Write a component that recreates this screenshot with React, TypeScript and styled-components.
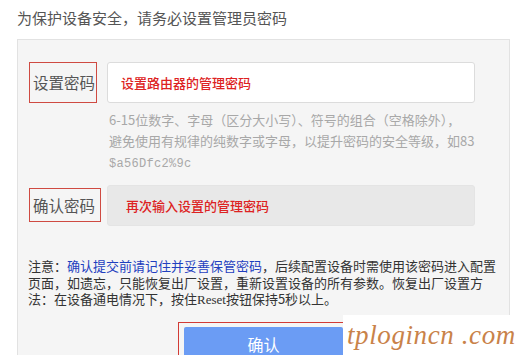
import styled, { createGlobalStyle } from "styled-components";

const GlobalStyle = createGlobalStyle`
    html, body {
        margin: 0;
        padding: 0;
        background: #ffffff;
        overflow: hidden;
    }
    body {
        font-family: "Noto Sans CJK SC", "Noto Sans", sans-serif;
    }
`;

const Page = styled.div`
    position: relative;
    width: 519px;
    height: 355px;
    overflow: hidden;
    background: #fff;
`;

const Title = styled.div`
    padding: 8px 0 0 17px;
    font-size: 15px;
    line-height: 20px;
    color: #555;
`;

const Panel = styled.div`
    margin: 11px 0 0 17px;
    width: 493px;
    height: 340px;
    box-sizing: border-box;
    border: 1px solid #e2e2e2;
    background: #f5f5f5;
    padding: 21px 12px 0 11px;
`;

const Row = styled.div<{ $top: number }>`
    display: flex;
    align-items: center;
    height: 42px;
    margin-top: ${p => p.$top}px;
`;

const Label = styled.div<{ $w: number; $h: number }>`
    box-sizing: border-box;
    width: ${p => p.$w}px;
    height: ${p => p.$h}px;
    border: 1px solid #cf4a42;
    display: flex;
    align-items: center;
    padding-left: 3px;
    font-size: 15.5px;
    color: #555;
    white-space: nowrap;
`;

const Field = styled.div<{ $disabled?: boolean }>`
    box-sizing: border-box;
    position: relative;
    width: 368px;
    height: 41px;
    margin-left: ${p => (p.$disabled ? 6 : 10)}px;
    border: 1px solid ${p => (p.$disabled ? "#e4e4e4" : "#dcdcdc")};
    border-radius: 3px;
    background: ${p => (p.$disabled ? "#e8e8e8" : "#ffffff")};
    display: flex;
    align-items: center;
    padding-left: ${p => (p.$disabled ? 18 : 13)}px;
    font-size: 13px;
    font-weight: 500;
    color: #dd2222;
    white-space: nowrap;
`;

const Hint = styled.div`
    margin: 6px 0 0 80px;
    font-size: 13px;
    line-height: 21px;
    color: #a8a8a8;
    white-space: nowrap;
`;

const Code = styled.span`
    font-family: "Liberation Mono", "DejaVu Sans Mono", monospace;
    font-size: 12px;
    letter-spacing: 0.3px;
`;

const Note = styled.div`
    margin: 32px 0 0 -1px;
    font-size: 13px;
    line-height: 16.5px;
    color: #333;
    white-space: nowrap;
`;

const Blue = styled.span`
    color: #1f3fbf;
`;

const Latin = styled.span`
    font-family: "Liberation Serif", serif;
`;

const ButtonFrame = styled.div`
    margin: 13px 0 0 149px;
    width: 170px;
    height: 60px;
    box-sizing: border-box;
    border: 1px solid #d23b35;
    padding: 4px 0 0 5px;
`;

const Button = styled.div`
    width: 159px;
    height: 50px;
    background: #6b9cf4;
    border-radius: 2px;
    color: #fff;
    font-size: 16px;
    line-height: 20px;
    display: flex;
    justify-content: center;
    padding-top: 7px;
    box-sizing: border-box;
`;

const Watermark = styled.div`
    position: absolute;
    left: 343px;
    top: 315px;
    width: 176px;
    height: 40px;
    background: #fff;
    padding-left: 4px;
    box-sizing: border-box;
    font-family: "Liberation Serif", "DejaVu Serif", serif;
    font-style: italic;
    font-size: 27px;
    line-height: 40px;
    color: #c98249;
    letter-spacing: 0.6px;
    white-space: nowrap;
`;

export default function App() {
    return (
        <Page>
            <GlobalStyle />
            <Title>为保护设备安全，请务必设置管理员密码</Title>
            <Panel>
                <Row $top={0}>
                    <Label $w={68} $h={41}>设置密码</Label>
                    <Field>设置路由器的管理密码</Field>
                </Row>
                <Hint>
                    6-15位数字、字母（区分大小写）、符号的组合（空格除外），<br />
                    避免使用有规律的纯数字或字母，以提升密码的安全等级，如83<br />
                    <Code>$a56Dfc2%9c</Code>
                </Hint>
                <Row $top={9}>
                    <Label $w={72} $h={34}>确认密码</Label>
                    <Field $disabled>再次输入设置的管理密码</Field>
                </Row>
                <Note>
                    注意：<Blue>确认提交前请记住并妥善保管密码</Blue>，后续配置设备时需使用该密码进入配置<br />
                    页面，如遗忘，只能恢复出厂设置，重新设置设备的所有参数。恢复出厂设置方<br />
                    法：在设备通电情况下，按住<Latin>Reset</Latin>按钮保持5秒以上。
                </Note>
                <ButtonFrame>
                    <Button>确认</Button>
                </ButtonFrame>
            </Panel>
            <Watermark>tplogincn .com</Watermark>
        </Page>
    );
}
